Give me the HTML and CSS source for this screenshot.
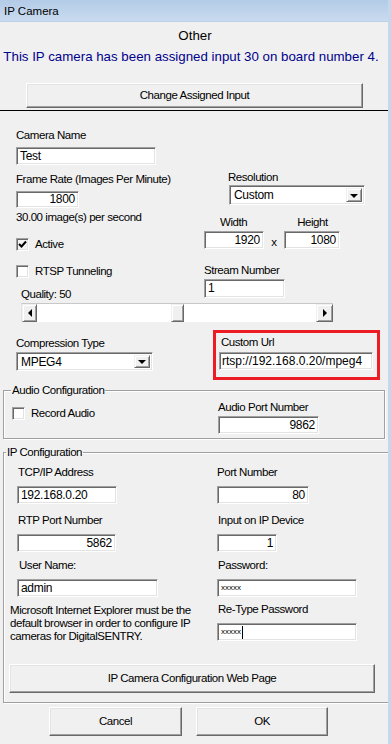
FILE: index.html
```html
<!doctype html>
<html lang="en">
<head>
	<meta charset="UTF-8">
	<title>IP Camera</title>
	<link rel="stylesheet" href="styles.css">
</head>
<body>
<div class="window">
	<div class="titlebar">IP Camera</div>

	<div class="header">
		<div class="type">Other</div>
		<div class="assigned">This IP camera has been assigned input 30 on board number 4.</div>
	</div>
	<div class="btn btn-change">Change Assigned Input</div>
	<div class="rule"></div>

	<!-- general settings -->
	<div class="row">
		<div class="col-left">
			<div class="label lbl-name">Camera Name</div>
			<div class="field f-name">Test</div>
			<div class="label lbl-rate">Frame Rate (Images Per Minute)</div>
			<div class="field num f-rate">1800</div>
			<div class="label lbl-ips">30.00 image(s) per second</div>
			<div class="check chk-active">
				<span class="box"><svg width="9" height="9" viewBox="0 0 9 9"><polyline points="1,4 3.5,6.5 8,1.5" fill="none" stroke="#000" stroke-width="2"/></svg></span>
				<span>Active</span>
			</div>
		</div>
		<div class="col-right">
			<div class="label lbl-res">Resolution</div>
			<div class="combo c-res"><span class="combo-text">Custom</span><span class="drop"><i></i></span></div>
			<div class="dims-labels"><span class="lbl-w">Width</span><span class="lbl-h">Height</span></div>
			<div class="dims">
				<div class="field num f-w">1920</div>
				<span class="times">x</span>
				<div class="field num f-h">1080</div>
			</div>
		</div>
	</div>

	<div class="row">
		<div class="col-left">
			<div class="check chk-rtsp"><span class="box"></span><span>RTSP Tunneling</span></div>
			<div class="label lbl-quality">Quality: 50</div>
		</div>
		<div class="col-right">
			<div class="label lbl-stream">Stream Number</div>
			<div class="field f-stream">1</div>
		</div>
	</div>

	<div class="slider">
		<span class="sbtn"><i class="arr-left"></i></span>
		<span class="track track-a"></span>
		<span class="thumb"></span>
		<span class="track"></span>
		<span class="sbtn sbtn-right"><i class="arr-right"></i></span>
	</div>

	<div class="row">
		<div class="col-left">
			<div class="label lbl-comp">Compression Type</div>
			<div class="combo c-comp"><span class="combo-text">MPEG4</span><span class="drop"><i></i></span></div>
		</div>
		<div class="highlight">
			<div class="label lbl-url">Custom Url</div>
			<div class="field f-url">rtsp://192.168.0.20/mpeg4</div>
		</div>
	</div>

	<!-- audio -->
	<fieldset class="group group-audio">
		<legend>Audio Configuration</legend>
		<div class="group-row">
			<div class="check chk-audio"><span class="box"></span><span>Record Audio</span></div>
			<div class="audio-port">
				<div class="label">Audio Port Number</div>
				<div class="field num f-aport">9862</div>
			</div>
		</div>
	</fieldset>

	<!-- ip -->
	<fieldset class="group group-ip">
		<legend>IP Configuration</legend>
		<div class="ip-row r1">
			<div class="ip-cell"><div class="label pl1">TCP/IP Address</div><div class="field f-ip">192.168.0.20</div></div>
			<div class="ip-cell"><div class="label">Port Number</div><div class="field num f-port">80</div></div>
		</div>
		<div class="ip-row r2">
			<div class="ip-cell"><div class="label pl1">RTP Port Number</div><div class="field num f-rtp">5862</div></div>
			<div class="ip-cell"><div class="label pl1">Input on IP Device</div><div class="field num f-dev">1</div></div>
		</div>
		<div class="ip-row r3">
			<div class="ip-cell"><div class="label pl2">User Name:</div><div class="field f-user">admin</div></div>
			<div class="ip-cell"><div class="label pl1">Password:</div><div class="field f-pass"><span class="mask">xxxxx</span></div></div>
		</div>
		<div class="ip-row r4">
			<div class="note">Microsoft Internet Explorer must be the<br>default browser in order to configure IP<br>cameras for DigitalSENTRY.</div>
			<div class="ip-cell"><div class="label pl1">Re-Type Password</div><div class="field f-pass f-retype"><span class="mask">xxxxx</span><span class="caret"></span></div></div>
		</div>
		<div class="btn btn-web">IP Camera Configuration Web Page</div>
	</fieldset>

	<div class="actions">
		<div class="btn btn-cancel">Cancel</div>
		<div class="btn btn-ok">OK</div>
	</div>
</div>
</body>
</html>
```

FILE: styles.css
```css
*{
	margin:0;
	padding:0;
	box-sizing:border-box;
}
html{
	background:#c3d7ee;
}
body{
	font-family:"Liberation Sans",Arial,sans-serif;
	font-size:11.5px;
	letter-spacing:-0.45px;
	color:#000;
}
.window{
	width:388px;
	height:744px;
	background:#f0f0f0;
	overflow:hidden;
}
.titlebar{
	height:22px;
	line-height:23px;
	padding-left:4px;
	font-size:11.5px;
	letter-spacing:0;
	background:linear-gradient(#b3cbe7,#c9dbef);
	border-bottom:1px solid #bcd0e8;
}
.header{
	padding-top:6px;
	font-size:13.3px;
	letter-spacing:0;
	text-align:center;
	line-height:16px;
}
.header .type{
	padding-left:2px;
}
.header .assigned{
	margin-top:5px;
	color:#00008c;
	padding-right:6px;
}

/* buttons */
.btn{
	height:25px;
	line-height:22px;
	text-align:center;
	background:#f0f0f0;
	border:1px solid;
	border-color:#fff #696969 #696969 #fff;
	box-shadow:inset -1px -1px 0 #a0a0a0,inset 1px 1px 0 #e3e3e3;
}
.btn-change{
	width:337px;
	margin:18px 0 0 26px;
}
.rule{
	height:1px;
	width:388px;
	background:#000;
	margin-top:2px;
}

/* layout */
.row{
	display:flex;
	align-items:flex-start;
}
.col-left{
	width:204px;
	padding-left:16px;
}
.col-right{
	flex:1;
}
.label{
	height:14px;
	line-height:14px;
	white-space:nowrap;
}

/* sunken text field */
.field{
	height:18px;
	line-height:16px;
	padding:0 3px;
	font-size:12px;
	letter-spacing:-0.3px;
	background:#fff;
	border:1px solid;
	border-color:#a0a0a0 #fff #fff #a0a0a0;
	box-shadow:inset 1px 1px 0 #696969,inset -1px -1px 0 #e3e3e3;
	white-space:nowrap;
	overflow:hidden;
}
.field.num{
	text-align:right;
}

.lbl-name{margin-top:17px;}
.f-name{margin-top:5px;width:140px;}
.lbl-rate{margin-top:7px;}
.f-rate{margin-top:5px;width:63px;height:17px;line-height:15px;}
.lbl-ips{margin-top:2px;}
.chk-active{margin-top:13px;}

.lbl-res{margin-top:59px;padding-left:24px;}
.c-res{margin:1px 0 0 25px;width:136px;height:20px;}
.dims-labels{
	display:flex;
	margin-top:10px;
	height:14px;
	line-height:14px;
}
.lbl-w{margin-left:16px;}
.lbl-h{margin-left:50px;}
.dims{
	display:flex;
	align-items:center;
	margin-top:2px;
}
.f-w{width:60px;}
.times{width:20px;text-align:center;padding-top:3px;}
.f-h{width:56px;}

/* checkbox */
.check{
	display:flex;
	align-items:center;
	height:14px;
	gap:6px;
	white-space:nowrap;
}
.check .box{
	width:13px;
	height:13px;
	display:flex;
	align-items:center;
	justify-content:center;
	background:#fff;
	border:1px solid;
	border-color:#a0a0a0 #fff #fff #a0a0a0;
	box-shadow:inset 1px 1px 0 #696969,inset -1px -1px 0 #e3e3e3;
}
.chk-active .box{background:#f4f4f4;}

.chk-rtsp{margin-top:13px;}
.lbl-quality{margin-top:9px;padding-left:5px;}
.lbl-stream{margin-top:12px;}
.f-stream{margin-top:2px;width:81px;height:19px;}

/* scroll bar used as quality slider */
.slider{
	display:flex;
	width:312px;
	height:19px;
	margin:2px 0 0 21px;
	background:#fff;
	border-top:1px solid #c8c8c8;
	border-left:1px solid #e3e3e3;
}
.sbtn,.thumb{
	display:flex;
	align-items:center;
	justify-content:center;
	background:#f0f0f0;
	border:1px solid;
	border-color:#f0f0f0 #696969 #696969 #f0f0f0;
	box-shadow:inset 1px 1px 0 #fff,inset -1px -1px 0 #a0a0a0;
}
.sbtn{width:15px;}
.sbtn-right{width:17px;}
.thumb{width:13px;}
.track{flex:1;}
.track-a{flex:0 0 134px;}
.arr-left{
	border-style:solid;
	border-width:4px 4px 4px 0;
	border-color:transparent #000 transparent transparent;
}
.arr-right{
	border-style:solid;
	border-width:4px 0 4px 4px;
	border-color:transparent transparent transparent #000;
}

/* combo box */
.combo{
	display:flex;
	align-items:center;
	padding:2px;
	font-size:12px;
	letter-spacing:-0.3px;
	background:#fff;
	border:1px solid;
	border-color:#a0a0a0 #fff #fff #a0a0a0;
	box-shadow:inset 1px 1px 0 #696969,inset -1px -1px 0 #e3e3e3;
}
.combo-text{flex:1;padding-left:2px;}
.drop{
	width:16px;
	height:100%;
	display:flex;
	align-items:center;
	justify-content:center;
	background:#f0f0f0;
	border:1px solid;
	border-color:#f0f0f0 #696969 #696969 #f0f0f0;
	box-shadow:inset 1px 1px 0 #fff,inset -1px -1px 0 #a0a0a0;
}
.drop i{
	border-style:solid;
	border-width:4px 4px 0 4px;
	border-color:#000 transparent transparent transparent;
	margin-top:1px;
}

.lbl-comp{margin-top:14px;}
.c-comp{margin-top:2px;width:137px;height:19px;}

.highlight{
	margin:8px 0 0 9px;
	width:167px;
	height:50px;
	border:3px solid #ed1c24;
}
.lbl-url{margin-top:2px;padding-left:5px;}
.f-url{margin:3px 0 0 3px;width:154px;padding:0 2px;letter-spacing:0;}

/* group boxes */
.group{
	width:382px;
	margin-left:3px;
	border:1px solid #a0a0a0;
	box-shadow:1px 1px 0 #fff,inset 1px 1px 0 #fff;
}
.group legend{
	height:14px;
	line-height:14px;
	padding:0 1px;
}
.group-audio{
	margin-top:3px;
	padding:0 0 4px 0;
}
.group-audio legend{margin-left:7px;}
.group-row{
	display:flex;
	align-items:flex-start;
}
.chk-audio{
	margin:9px 0 0 8px;
	width:206px;
}
.audio-port{margin-top:3px;}
.f-aport{margin-top:2px;width:101px;}

.group-ip{
	margin-top:6px;
	padding:0 0 9px 0;
}
.group-ip legend{margin-left:2px;}
.ip-row{
	display:flex;
	align-items:flex-start;
}
.ip-cell{
	width:200px;
}
.ip-cell:first-child{
	margin-left:13px;
}
.ip-cell .field{margin-top:7px;}
.pl1{padding-left:1px;}
.pl2{padding-left:2px;}
.r1{margin-top:6px;}
.r2{margin-top:9px;}
.r3{margin-top:6px;}
.r4{margin-top:5px;}
.f-ip{width:100px;}
.f-port{width:92px;}
.f-rtp{width:99px;}
.f-dev{width:60px;}
.f-user{width:141px;}
.f-pass{width:140px;display:flex;align-items:center;}
.mask{font-size:8px;letter-spacing:0;line-height:8px;}
.caret{
	width:1px;
	height:13px;
	background:#000;
	margin-left:1px;
}
.note{
	width:207px;
	margin:2px 0 0 6px;
	line-height:13px;
	white-space:nowrap;
}
.r4 .ip-cell{margin-left:0;}
.btn-web{
	width:366px;
	height:29px;
	line-height:26px;
	margin:21px 0 0 5px;
}

.actions{
	display:flex;
	gap:14px;
	margin:4px 0 0 49px;
}
.actions .btn{
	height:29px;
	line-height:26px;
}
.btn-cancel{width:133px;}
.btn-ok{width:132px;}
```
